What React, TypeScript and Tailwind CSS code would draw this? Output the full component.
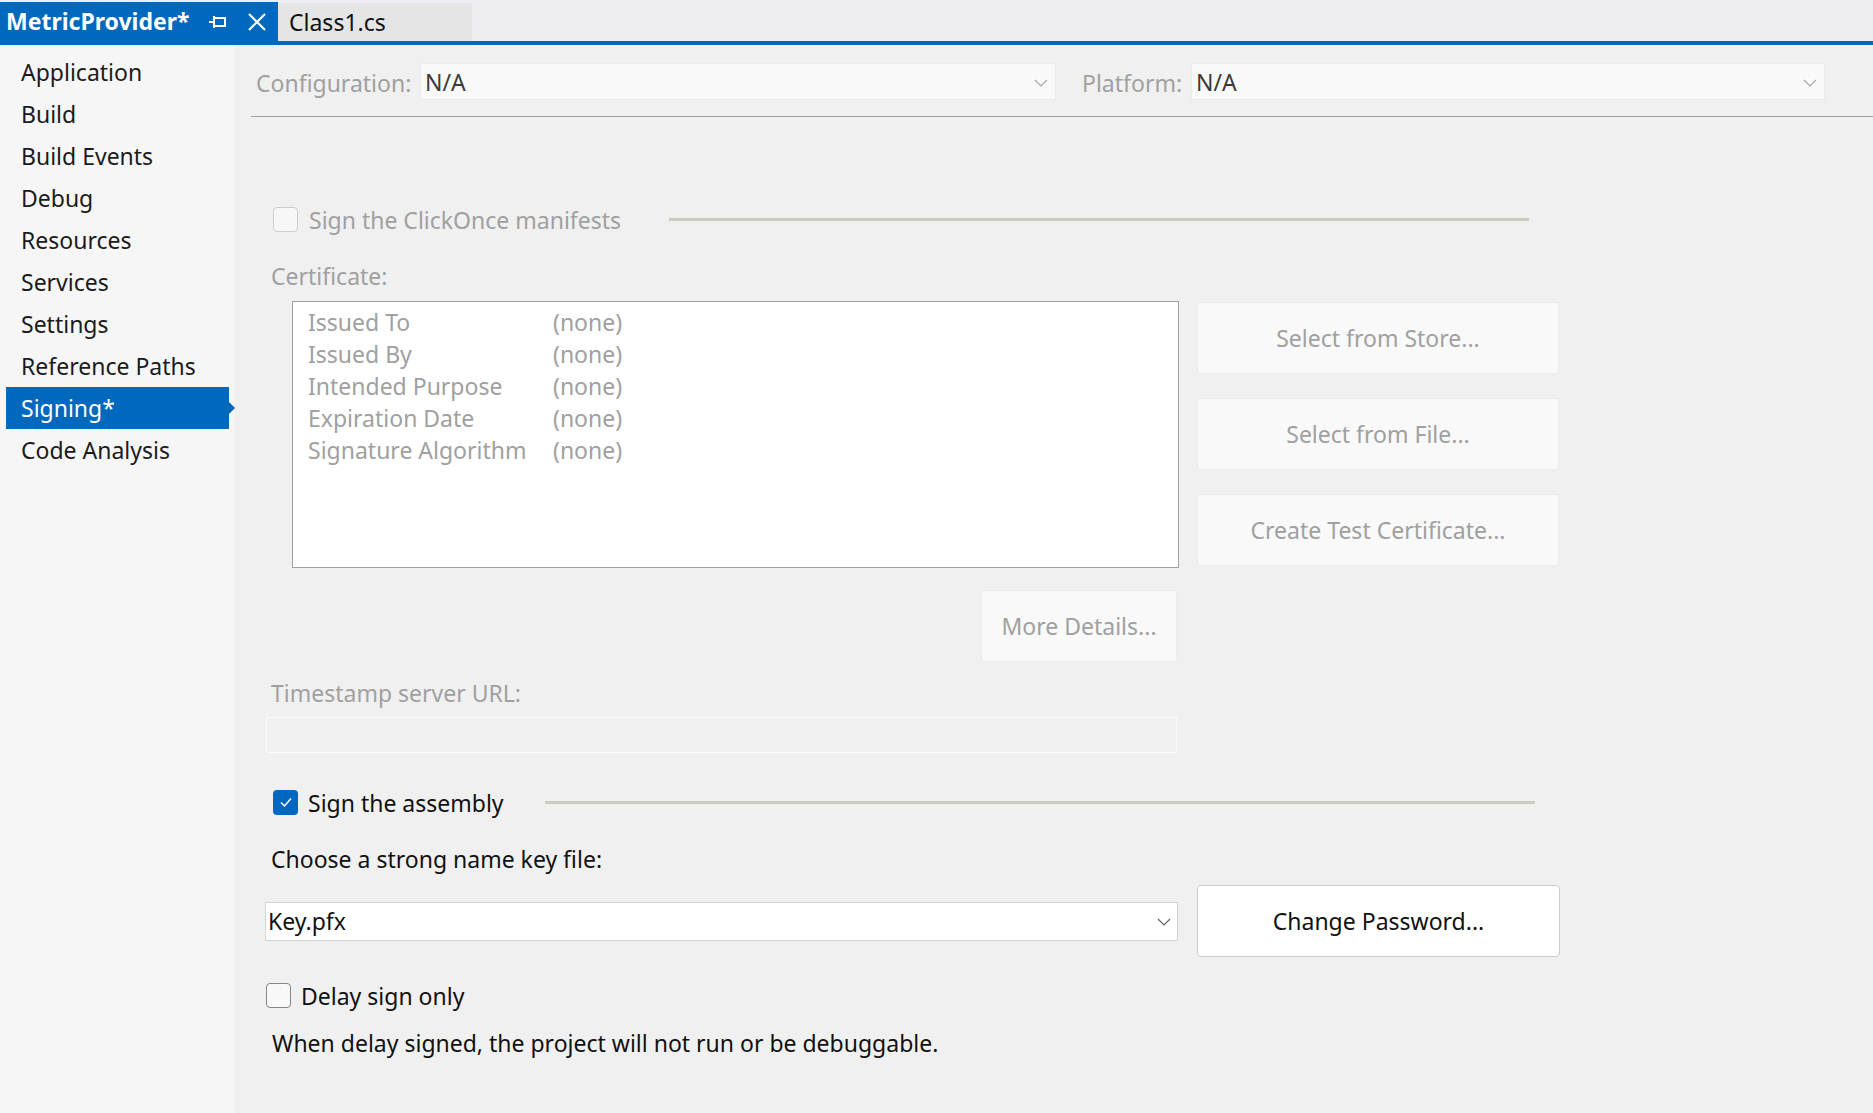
import React from 'react'

const sideItems = [
  'Application',
  'Build',
  'Build Events',
  'Debug',
  'Resources',
  'Services',
  'Settings',
  'Reference Paths',
  'Signing*',
  'Code Analysis',
]

const certRows = [
  ['Issued To', '(none)'],
  ['Issued By', '(none)'],
  ['Intended Purpose', '(none)'],
  ['Expiration Date', '(none)'],
  ['Signature Algorithm', '(none)'],
]

function Chevron({ className }: { className?: string }) {
  return (
    <svg width="14" height="8" viewBox="0 0 14 8" className={className}>
      <polyline points="1,1 7,7 13,1" fill="none" stroke="currentColor" strokeWidth="1.2" />
    </svg>
  )
}

function PinIcon() {
  return (
    <svg width="18" height="14" viewBox="0 0 18 14">
      <g fill="none" stroke="white" strokeWidth="2">
        <line x1="0" y1="7" x2="5" y2="7" />
        <line x1="5" y1="1" x2="5" y2="13" />
        <rect x="5" y="3" width="11" height="8" />
      </g>
    </svg>
  )
}

function CloseIcon() {
  return (
    <svg width="18" height="18" viewBox="0 0 18 18">
      <g stroke="white" strokeWidth="2.2">
        <line x1="1" y1="1" x2="17" y2="17" />
        <line x1="17" y1="1" x2="1" y2="17" />
      </g>
    </svg>
  )
}

function SideNav() {
  return (
    <div className="w-[235px] shrink-0 bg-[#f6f6f6] pt-[6px]">
      {sideItems.map((item) => {
        const active = item === 'Signing*'
        return (
          <div key={item} className="relative h-[42px] flex items-center">
            {active ? (
              <>
                <div className="ml-[6px] w-[223px] h-[42px] bg-[#0068bd] text-white flex items-center pl-[15px]">
                  {item}
                </div>
                <div className="w-0 h-0 border-y-[6px] border-y-transparent border-l-[6px] border-l-[#0068bd]" />
              </>
            ) : (
              <span className="pl-[21px] text-[#1b1b1b]">{item}</span>
            )}
          </div>
        )
      })}
    </div>
  )
}

function DisabledButton({ label, className }: { label: string; className?: string }) {
  return (
    <div
      className={
        'h-[72px] bg-[#f9f9f9] border border-[#ececec] rounded-[3px] flex items-center justify-center text-[#a0a0a0] ' +
        (className ?? '')
      }
    >
      {label}
    </div>
  )
}

export default function App() {
  return (
    <div className="w-[1873px] h-[1113px] flex flex-col bg-[#f0f0f0] overflow-hidden font-['Noto_Sans','Open_Sans',sans-serif] text-[23px] leading-none whitespace-nowrap">
      {/* document tabs */}
      <div className="h-[45px] shrink-0 bg-[#eeeef2] border-b-4 border-[#0068bd] flex items-end">
        <div className="w-[278px] h-[39px] bg-[#0068bd] flex items-center pl-[6px] text-white font-bold">
          <span className="w-[193px]">MetricProvider*</span>
          <span className="ml-[10px] flex items-center">
            <PinIcon />
          </span>
          <span className="ml-[21px] flex items-center">
            <CloseIcon />
          </span>
        </div>
        <div className="w-[194px] h-[38px] bg-[#e5e5e5] flex items-center pl-[11px] text-[#111]">Class1.cs</div>
      </div>

      <div className="flex flex-1">
        <SideNav />

        <div className="flex-1 flex flex-col">
          {/* configuration bar */}
          <div className="ml-[16px] pl-[5px] pt-[18px] pb-[16px] border-b border-[#a0a0a0] flex items-center">
            <span className="text-[#a0a0a0] w-[164px] pt-[3px]">Configuration:</span>
            <div className="w-[636px] h-[37px] bg-[#f9f9f9] border border-[#ebebeb] flex items-center justify-between px-[4px] pt-[2px] text-[#3a3a3a]">
              <span>N/A</span>
              <Chevron className="text-[#a8a8a8] mr-[3px]" />
            </div>
            <span className="text-[#a0a0a0] ml-[26px] w-[109px] pt-[3px]">Platform:</span>
            <div className="w-[634px] h-[37px] bg-[#f9f9f9] border border-[#ebebeb] flex items-center justify-between px-[4px] pt-[2px] text-[#3a3a3a]">
              <span>N/A</span>
              <Chevron className="text-[#a8a8a8] mr-[3px]" />
            </div>
          </div>

          {/* signing page */}
          <div className="pl-[30px] flex flex-col">
            <div className="mt-[89px] h-[26px] flex items-center">
              <div className="ml-[8px] w-[25px] h-[25px] rounded-[4px] border border-[#cdcdcd] bg-[#f7f7f7]" />
              <span className="ml-[11px] w-[360px] pt-[3px] text-[#a0a0a0]">Sign the ClickOnce manifests</span>
              <div className="w-[860px] h-[3px] bg-[#cbcbbe]" />
            </div>

            <div className="mt-[28px] h-[30px] flex items-center pl-[6px] pt-[2px] text-[#a0a0a0]">Certificate:</div>

            <div className="mt-[11px] flex items-start">
              <div className="ml-[27px] w-[887px] h-[267px] bg-white border border-[#a0a0a0] pt-[4px] pl-[15px] text-[#a0a0a0]">
                {certRows.map(([k, v]) => (
                  <div key={k} className="h-[32px] flex items-center">
                    <span className="w-[245px]">{k}</span>
                    <span>{v}</span>
                  </div>
                ))}
              </div>
              <div className="ml-[18px] w-[362px] flex flex-col gap-[24px] pt-[1px]">
                <DisabledButton label="Select from Store..." />
                <DisabledButton label="Select from File..." />
                <DisabledButton label="Create Test Certificate..." />
              </div>
            </div>

            <div className="mt-[22px] flex">
              <DisabledButton label="More Details..." className="ml-[716px] w-[196px]" />
            </div>

            <div className="mt-[15px] h-[30px] flex items-center pl-[6px] pt-[2px] text-[#a0a0a0]">Timestamp server URL:</div>

            <div className="mt-[10px] ml-[1px] w-[911px] h-[36px] border border-[#fbfbfb] bg-[#f0f0f0]" />

            <div className="mt-[36px] h-[26px] flex items-center">
              <div className="ml-[8px] w-[25px] h-[25px] rounded-[4px] bg-[#0067c0] flex items-center justify-center">
                <svg width="14" height="12" viewBox="0 0 14 12">
                  <polyline points="2,6.5 5.5,10 12,2.5" fill="none" stroke="white" strokeWidth="1.5" />
                </svg>
              </div>
              <span className="ml-[10px] w-[237px] pt-[2px] text-[#111]">Sign the assembly</span>
              <div className="w-[990px] h-[3px] bg-[#cbcbbe]" />
            </div>

            <div className="mt-[29px] h-[30px] flex items-center pl-[6px] text-[#111]">Choose a strong name key file:</div>

            <div className="mt-[11px] flex items-center">
              <div className="w-[913px] h-[39px] bg-white border border-[#d4d4d4] flex items-center justify-between pl-[2px] pr-[6px] pt-[1px] text-[#111]">
                <span>Key.pfx</span>
                <Chevron className="text-[#606060]" />
              </div>
              <div className="ml-[19px] w-[363px] h-[72px] bg-white border border-[#cccccc] rounded-[4px] flex items-center justify-center text-[#111]">
                Change Password...
              </div>
            </div>

            <div className="mt-[26px] h-[25px] flex items-center">
              <div className="ml-[1px] w-[25px] h-[25px] rounded-[4px] border-[1.5px] border-[#868686] bg-[#f8f8f8]" />
              <span className="ml-[10px] pt-[2px] text-[#111]">Delay sign only</span>
            </div>

            <div className="mt-[20px] h-[30px] flex items-center pl-[7px] text-[#111]">
              When delay signed, the project will not run or be debuggable.
            </div>
          </div>
        </div>
      </div>
    </div>
  )
}
